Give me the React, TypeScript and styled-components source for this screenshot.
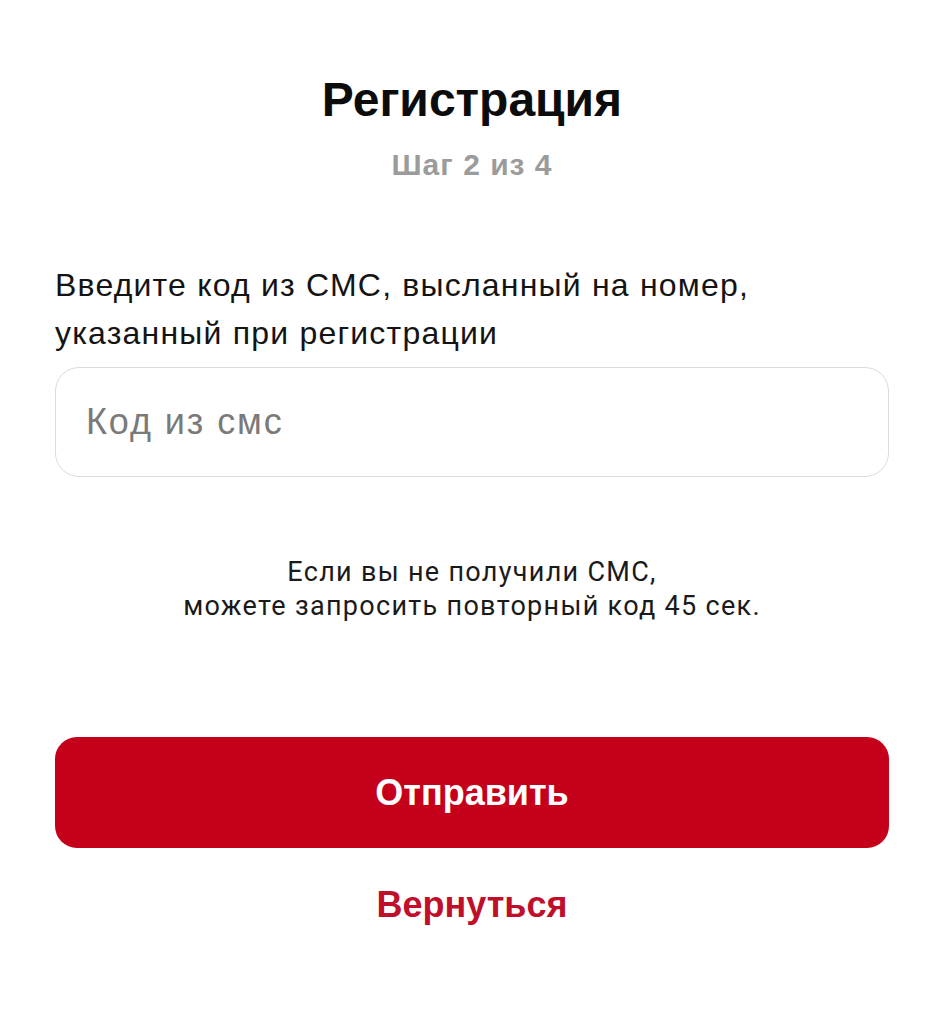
import React, { useState } from 'react';
import styled, { createGlobalStyle } from 'styled-components';

const GlobalStyle = createGlobalStyle`
  html, body {
    margin: 0;
    padding: 0;
    background: #ffffff;
  }
  body {
    font-family: "Liberation Sans", Arial, sans-serif;
    color: #111111;
  }
`;

const Page = styled.main`
  box-sizing: border-box;
  width: 930px;
  min-height: 1024px;
  padding: 70px 41px 0 55px;
  display: flex;
  flex-direction: column;
`;

const Header = styled.header`
  display: flex;
  flex-direction: column;
  align-items: center;
`;

const Title = styled.h1`
  margin: 0;
  font-size: 48px;
  line-height: 60px;
  font-weight: 700;
  color: #0c0c0c;
`;

const Step = styled.div`
  margin-top: 15px;
  font-size: 30px;
  line-height: 40px;
  font-weight: 700;
  letter-spacing: 1px;
  color: #9b9b9b;
`;

const Form = styled.form`
  display: flex;
  flex-direction: column;
  margin-top: 76px;
`;

const Label = styled.label`
  font-size: 32px;
  line-height: 48px;
  letter-spacing: 1.2px;
  color: #141414;
`;

const CodeInput = styled.input`
  box-sizing: border-box;
  margin-top: 10px;
  width: 100%;
  height: 110px;
  padding: 0 30px;
  border: 1.5px solid #dcdcdc;
  border-radius: 24px;
  background: #ffffff;
  font-family: "Liberation Sans", Arial, sans-serif;
  font-size: 36px;
  letter-spacing: 1.9px;
  color: #222222;
  outline: none;

  &::placeholder {
    color: #7a7a7a;
  }
`;

const Hint = styled.p`
  margin: 78px 0 0;
  text-align: center;
  font-family: Roboto, "Liberation Sans", sans-serif;
  font-size: 27px;
  line-height: 34px;
  letter-spacing: 1.3px;
  color: #1a1a1a;
`;

const SubmitButton = styled.button`
  margin-top: 114px;
  height: 111px;
  width: 100%;
  border: none;
  border-radius: 22px;
  background: #c5001a;
  color: #ffffff;
  font-family: "Liberation Sans", Arial, sans-serif;
  font-size: 36px;
  font-weight: 700;
  cursor: pointer;
`;

const BackLink = styled.button`
  align-self: center;
  margin-top: 31px;
  border: none;
  background: none;
  padding: 0;
  color: #bf0f2b;
  font-family: "Liberation Sans", Arial, sans-serif;
  font-size: 36px;
  line-height: 52px;
  font-weight: 700;
  cursor: pointer;
`;

export default function App() {
  const [code, setCode] = useState('');

  return (
    <>
      <GlobalStyle />
      <Page>
        <Header>
          <Title>Регистрация</Title>
          <Step>Шаг 2 из 4</Step>
        </Header>
        <Form onSubmit={(e) => e.preventDefault()}>
          <Label htmlFor="sms-code">
            Введите код из СМС, высланный на номер,
            <br />
            указанный при регистрации
          </Label>
          <CodeInput
            id="sms-code"
            placeholder="Код из смс"
            value={code}
            onChange={(e) => setCode(e.target.value)}
          />
          <Hint>
            Если вы не получили СМС,
            <br />
            можете запросить повторный код 45 сек.
          </Hint>
          <SubmitButton type="submit">Отправить</SubmitButton>
          <BackLink type="button">Вернуться</BackLink>
        </Form>
      </Page>
    </>
  );
}
